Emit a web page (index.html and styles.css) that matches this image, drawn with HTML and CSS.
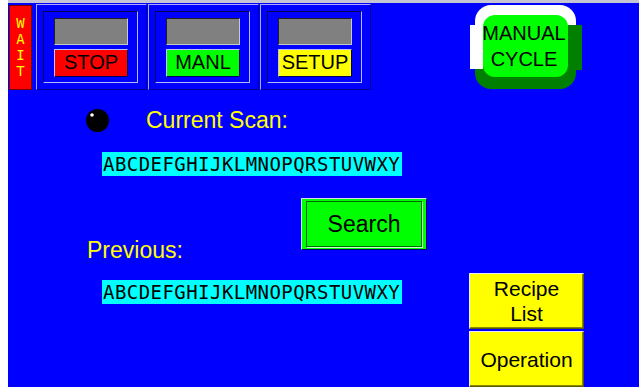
FILE: index.html
```html
<!DOCTYPE html>
<html>
<head>
<meta charset="utf-8">
<link rel="stylesheet" href="styles.css">
</head>
<body>
<div class="panel">
  <div class="top">
    <div class="wait"><span>W</span><span>A</span><span>I</span><span>T</span></div>
    <div class="tile"><div class="frame"><div class="lamp"></div><div class="label red">STOP</div></div></div>
    <div class="tile"><div class="frame"><div class="lamp"></div><div class="label green">MANL</div></div></div>
    <div class="tile"><div class="frame"><div class="lamp"></div><div class="label yellow">SETUP</div></div></div>
    <div class="cycle">
      <svg class="cycle-bg" width="112" height="84" viewBox="0 0 112 84">
        <rect x="5" y="0" width="101" height="60" rx="16" fill="#ffffff"/>
        <rect x="5" y="28" width="101" height="56" rx="16" fill="#007f00"/>
        <rect x="0" y="20" width="13" height="44" fill="#ffffff"/>
        <rect x="98" y="20" width="14" height="45" fill="#007f00"/>
        <rect x="13" y="10" width="85" height="62" rx="12" fill="#00ff00"/>
      </svg>
      <div class="cycle-text">MANUAL<br>CYCLE</div>
    </div>
  </div>
  <div class="main">
    <div class="left">
      <div class="scan-row">
        <svg class="ball" width="23" height="23" viewBox="0 0 23 23">
          <circle cx="11.5" cy="11.5" r="11.5" fill="#000"/>
          <circle cx="6" cy="6" r="1.8" fill="#fff"/>
        </svg>
        <div class="caption scan-label">Current Scan:</div>
      </div>
      <div class="field field-current">ABCDEFGHIJKLMNOPQRSTUVWXY</div>
      <div class="mid-row">
        <div class="caption prev-label">Previous:</div>
        <div class="btn-search"><span>Search</span></div>
      </div>
      <div class="field field-prev">ABCDEFGHIJKLMNOPQRSTUVWXY</div>
    </div>
    <div class="right">
      <div class="ybtn ybtn-two">Recipe<br>List</div>
      <div class="ybtn">Operation</div>
    </div>
  </div>
</div>
</body>
</html>
```

FILE: styles.css
```css
html, body {
  margin: 0;
  padding: 0;
  background: #ffffff;
}

.panel {
  width: 631px;
  height: 384px;
  margin-left: 8px;
  border-top: 3px solid #c4c4d4;
  background: #0000ff;
  overflow: hidden;
  font-family: "Liberation Sans", Arial, sans-serif;
}

.top {
  display: flex;
  align-items: flex-start;
  padding-top: 1px;
}

.wait {
  box-sizing: border-box;
  width: 23px;
  height: 85px;
  margin: 1px 4px 0 1px;
  background: #ff0000;
  border: 1px solid #7a0000;
  display: flex;
  flex-direction: column;
  align-items: center;
  padding-top: 9px;
  color: #ffff00;
  font-family: "DejaVu Sans Mono", monospace;
  font-size: 14px;
  line-height: 16px;
}

.tile {
  box-sizing: border-box;
  width: 111px;
  height: 86px;
  margin-right: 1px;
  border: 1px solid;
  border-color: #a8a8ff #000090 #000090 #a8a8ff;
  padding: 6px 0 0 6px;
}

.frame {
  box-sizing: border-box;
  width: 95px;
  height: 72px;
  border: 1px solid;
  border-color: #000050 #b8b8ff #b8b8ff #000050;
  padding: 6px 0 0 10px;
}

.lamp {
  box-sizing: border-box;
  width: 74px;
  height: 27px;
  background: #808080;
  border: 1px solid;
  border-color: #202020 #c8c8c8 #c8c8c8 #202020;
}

.label {
  box-sizing: border-box;
  width: 74px;
  height: 28px;
  margin-top: 4px;
  border: 1px solid;
  border-color: #c0c0ff #000060 #000060 #c0c0ff;
  text-align: center;
  font-size: 20px;
  line-height: 25px;
  color: #000;
}

.red { background: #ff0000; }
.green { background: #00ff00; }
.yellow { background: #ffff00; }

.cycle {
  display: grid;
  width: 112px;
  height: 84px;
  margin: 1px 0 0 98px;
}

.cycle-bg,
.cycle-text {
  grid-area: 1 / 1;
}

.cycle-text {
  padding-top: 15px;
  padding-right: 4px;
  text-align: center;
  font-size: 20px;
  line-height: 26px;
  color: #000;
}

.main {
  display: flex;
  align-items: flex-start;
}

.left {
  width: 419px;
}

.scan-row {
  display: flex;
  align-items: center;
  margin-top: 17px;
  height: 26px;
}

.ball {
  margin-left: 78px;
}

.caption {
  color: #ffff00;
  font-size: 23px;
  line-height: 26px;
}

.scan-label {
  margin-left: 37px;
}

.field {
  width: 300px;
  height: 24px;
  margin-left: 94px;
  padding-left: 1px;
  box-sizing: border-box;
  background: #00ffff;
  color: #000;
  font-family: "DejaVu Sans Mono", monospace;
  font-size: 19px;
  letter-spacing: 0.45px;
  line-height: 24px;
  white-space: nowrap;
}

.field-current {
  margin-top: 19px;
}

.mid-row {
  display: flex;
  align-items: flex-start;
  margin-top: 22px;
}

.prev-label {
  flex: 0 0 214px;
  margin-left: 79px;
  margin-top: 39px;
}

.btn-search {
  box-sizing: border-box;
  position: relative;
  width: 126px;
  height: 52px;
  background: #00ff00;
  border: 1px solid;
  border-color: #d8d8ff #000070 #000070 #d8d8ff;
  display: flex;
  align-items: center;
  justify-content: center;
  font-size: 23px;
  line-height: 26px;
  color: #000;
}

.btn-search::before {
  content: "";
  position: absolute;
  left: 4px;
  top: 2px;
  right: 4px;
  bottom: 2px;
  border: 1px solid #006800;
  box-shadow: 1px 1px 0 #c8ffc8;
}

.btn-search span {
  position: relative;
}

.field-prev {
  margin-top: 17px;
}

.right {
  display: flex;
  flex-direction: column;
  gap: 2px;
  margin-left: 42px;
  margin-top: 183px;
}

.ybtn {
  box-sizing: border-box;
  width: 115px;
  height: 56px;
  background: #ffff00;
  border: 1px solid;
  border-color: #e8e8ff #5a5a00 #5a5a00 #e8e8ff;
  box-shadow: inset -1px -1px 0 #8a8a00;
  display: flex;
  align-items: center;
  justify-content: center;
  text-align: center;
  font-size: 21px;
  line-height: 25px;
  color: #000;
}
```
